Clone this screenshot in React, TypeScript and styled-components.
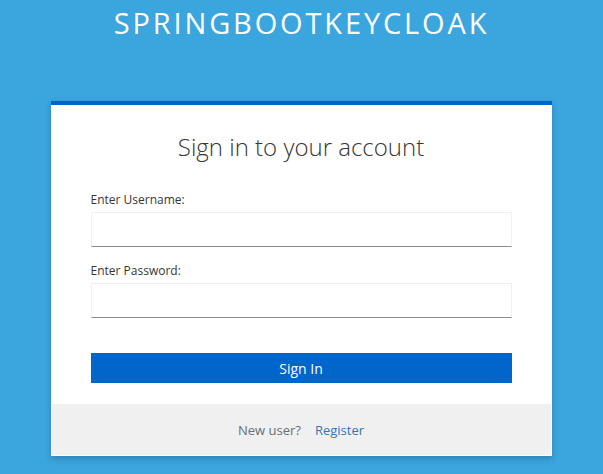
import React from "react";
import styled, { createGlobalStyle } from "styled-components";

const Global = createGlobalStyle`
  html, body { margin: 0; padding: 0; }
  body {
    background: #3ba5dd;
    font-family: "Open Sans", "Noto Sans", sans-serif;
    height: 474px;
    overflow: hidden;
  }
`;

const Page = styled.div`
  display: flex;
  flex-direction: column;
  align-items: center;
`;

const Brand = styled.h1`
  margin: 0;
  padding-top: 3px;
  height: 98px;
  font-size: 29px;
  font-weight: 400;
  letter-spacing: 2.85px;
  color: #ffffff;
  line-height: 40px;
`;

const Card = styled.div`
  width: 501px;
  margin-left: -1px;
  background: #ffffff;
  border-top: 4px solid #0066cc;
  box-shadow: 0 3px 6px rgba(0, 40, 80, 0.25);
  display: flex;
  flex-direction: column;
`;

const Body = styled.div`
  padding: 26px 40px 21px;
  display: flex;
  flex-direction: column;
`;

const Heading = styled.h2`
  margin: 0 0 29px;
  text-align: center;
  font-size: 24px;
  font-weight: 300;
  color: #363636;
  line-height: 32px;
`;

const Field = styled.div<{ $mb: number }>`
  display: flex;
  flex-direction: column;
  margin-bottom: ${(p) => p.$mb}px;
`;

const Label = styled.label`
  font-size: 12px;
  color: #363636;
  line-height: 16px;
  margin-bottom: 4px;
`;

const Input = styled.input`
  box-sizing: border-box;
  height: 35px;
  width: 100%;
  border: 1px solid #f0f0f0;
  border-bottom-color: #8a8d90;
  background: #fff;
  outline: none;
  font-family: inherit;
`;

const Button = styled.button`
  height: 30px;
  width: 100%;
  border: none;
  background: #0066cc;
  color: #ffffff;
  font-family: inherit;
  font-size: 14px;
  font-weight: 400;
  cursor: pointer;
`;

const Footer = styled.div`
  margin: 0 1px 1px;
  height: 51px;
  background: #f0f0f0;
  display: flex;
  align-items: center;
  justify-content: center;
  gap: 14px;
  font-size: 13px;
  color: #6a6e73;
`;

const Link = styled.a`
  color: #2f78b8;
  text-decoration: none;
`;

export default function App() {
  return (
    <Page>
      <Global />
      <Brand>SPRINGBOOTKEYCLOAK</Brand>
      <Card>
        <Body>
          <Heading>Sign in to your account</Heading>
          <Field $mb={16}>
            <Label>Enter Username:</Label>
            <Input type="text" />
          </Field>
          <Field $mb={35}>
            <Label>Enter Password:</Label>
            <Input type="password" />
          </Field>
          <Button>Sign In</Button>
        </Body>
        <Footer>
          <span>New user?</span>
          <Link href="#">Register</Link>
        </Footer>
      </Card>
    </Page>
  );
}
